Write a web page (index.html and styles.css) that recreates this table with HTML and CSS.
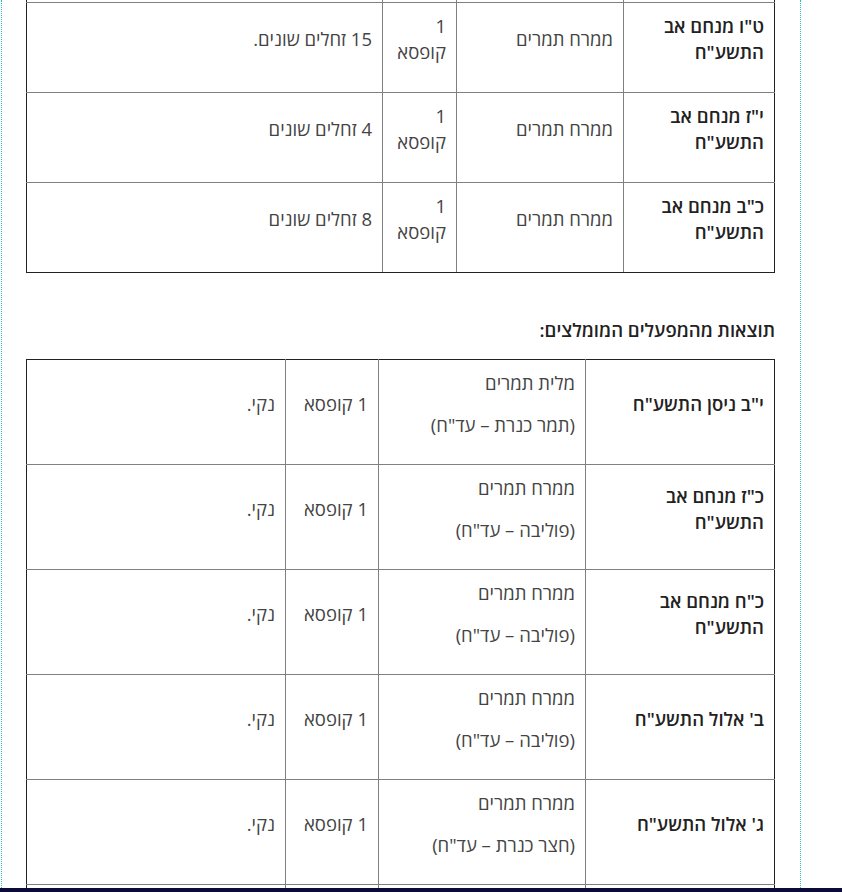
FILE: index.html
```html
<!DOCTYPE html>
<html lang="he" dir="rtl">
<head>
<meta charset="utf-8">
<title>תוצאות בדיקות</title>
<link rel="stylesheet" href="styles.css">
</head>
<body>
<div class="page">
  <main class="content">
    <table class="results results-first">
      <colgroup>
        <col class="c-date1"><col class="c-item1"><col class="c-qty1"><col class="c-res1">
      </colgroup>
      <tbody>
        <tr>
          <td class="date"><p>י"ד מנחם אב התשע"ח</p></td>
          <td><p>ממרח תמרים</p></td>
          <td><p>1 קופסא</p></td>
          <td><p>זחלים שונים</p></td>
        </tr>
        <tr>
          <td class="date"><p>ט"ו מנחם אב התשע"ח</p></td>
          <td><p>ממרח תמרים</p></td>
          <td><p>1 קופסא</p></td>
          <td><p>15 זחלים שונים.</p></td>
        </tr>
        <tr>
          <td class="date"><p>י"ז מנחם אב התשע"ח</p></td>
          <td><p>ממרח תמרים</p></td>
          <td><p>1 קופסא</p></td>
          <td><p>4 זחלים שונים</p></td>
        </tr>
        <tr>
          <td class="date"><p>כ"ב מנחם אב התשע"ח</p></td>
          <td><p>ממרח תמרים</p></td>
          <td><p>1 קופסא</p></td>
          <td><p>8 זחלים שונים</p></td>
        </tr>
      </tbody>
    </table>

    <h3 class="section-title">תוצאות מהמפעלים המומלצים:</h3>

    <table class="results">
      <colgroup>
        <col class="c-date2"><col class="c-item2"><col class="c-qty2"><col class="c-res2">
      </colgroup>
      <tbody>
        <tr>
          <td class="date"><p>י"ב ניסן התשע"ח</p></td>
          <td><p>מלית תמרים</p><p>(תמר כנרת – עד"ח)</p></td>
          <td><p>1 קופסא</p></td>
          <td><p>נקי.</p></td>
        </tr>
        <tr>
          <td class="date"><p>כ"ז מנחם אב התשע"ח</p></td>
          <td><p>ממרח תמרים</p><p>(פוליבה – עד"ח)</p></td>
          <td><p>1 קופסא</p></td>
          <td><p>נקי.</p></td>
        </tr>
        <tr>
          <td class="date"><p>כ"ח מנחם אב התשע"ח</p></td>
          <td><p>ממרח תמרים</p><p>(פוליבה – עד"ח)</p></td>
          <td><p>1 קופסא</p></td>
          <td><p>נקי.</p></td>
        </tr>
        <tr>
          <td class="date"><p>ב' אלול התשע"ח</p></td>
          <td><p>ממרח תמרים</p><p>(פוליבה – עד"ח)</p></td>
          <td><p>1 קופסא</p></td>
          <td><p>נקי.</p></td>
        </tr>
        <tr>
          <td class="date"><p>ג' אלול התשע"ח</p></td>
          <td><p>ממרח תמרים</p><p>(חצר כנרת – עד"ח)</p></td>
          <td><p>1 קופסא</p></td>
          <td><p>נקי.</p></td>
        </tr>
        <tr>
          <td class="date"><p>ד' אלול התשע"ח</p></td>
          <td><p>ממרח תמרים</p><p>(פוליבה – עד"ח)</p></td>
          <td><p>1 קופסא</p></td>
          <td><p>נקי.</p></td>
        </tr>
      </tbody>
    </table>
  </main>
</div>
<div class="footer-bar"></div>
</body>
</html>
```
FILE: styles.css
```css
html, body {
  margin: 0;
  padding: 0;
  background: #fff;
  overflow: hidden;
}

body {
  font-family: "Open Sans", "DejaVu Sans", sans-serif;
  font-size: 18.5px;
  line-height: 26px;
  color: #444;
  height: 892px;
}

.page {
  margin-left: 1px;
  margin-right: auto;
  width: 798px;
  height: 892px;
  border-left: 1px dotted #2bbfb3;
  border-right: 1px dotted #2bbfb3;
  overflow: hidden;
}

.content {
  padding: 0 25px 0 25px;
}

.results {
  width: 748px;
  table-layout: fixed;
  border-collapse: collapse;
  border: 1px solid #222;
}

.results-first {
  margin-top: -88px;
}

.results td {
  border: 1px solid #808080;
  padding: 10px 10px;
  vertical-align: middle;
  text-align: right;
}

.results-first td {
  padding-bottom: 11px;
}

.results td p {
  margin: 0 0 16px;
}

.results td.date {
  color: #222;
  font-weight: 600;
}

.results tr:first-child td { border-top-color: #222; }
.results tr:last-child td { border-bottom-color: #222; }
.results td:first-child { border-right-color: #222; }
.results td:last-child { border-left-color: #222; }

.c-date1 { width: 151px; }
.c-item1 { width: 167px; }
.c-qty1 { width: 74px; }
.c-res1 { width: 356px; }

.c-date2 { width: 189px; }
.c-item2 { width: 207px; }
.c-qty2 { width: 93px; }
.c-res2 { width: 259px; }

.section-title {
  margin: 44px 0 16px;
  font-size: 18.5px;
  line-height: 26px;
  font-weight: 600;
  color: #222;
}

.footer-bar {
  position: fixed;
  left: 0;
  right: 0;
  bottom: 0;
  height: 4px;
  background: #0b0b38;
}
```
